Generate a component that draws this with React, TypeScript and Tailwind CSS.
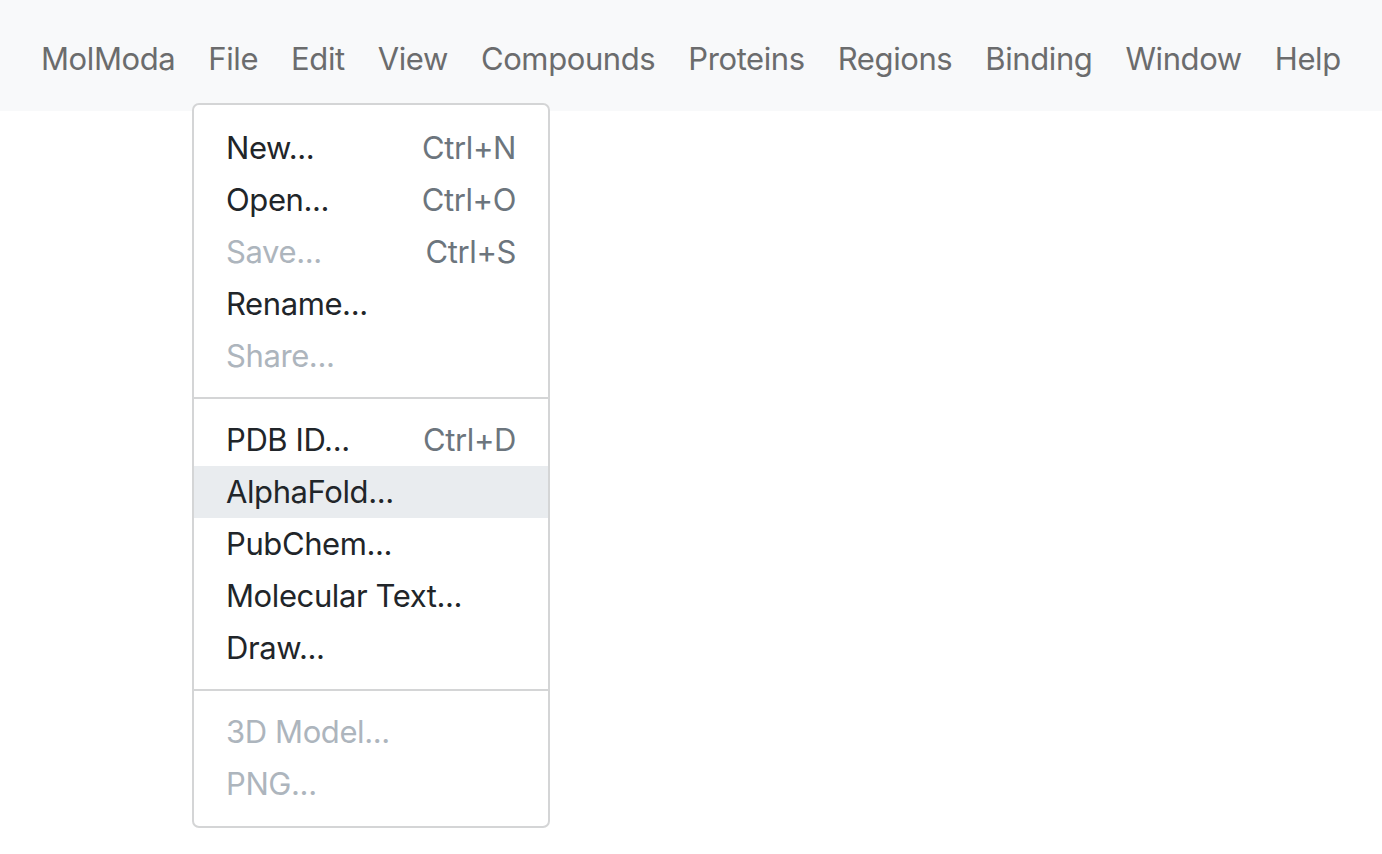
import React from 'react';

type Item = { label: string; shortcut?: string; disabled?: boolean; active?: boolean };

const groups: Item[][] = [
    [
        {label: 'New...', shortcut: 'Ctrl+N'},
        {label: 'Open...', shortcut: 'Ctrl+O'},
        {label: 'Save...', shortcut: 'Ctrl+S', disabled: true},
        {label: 'Rename...'},
        {label: 'Share...', disabled: true},
    ],
    [
        {label: 'PDB ID...', shortcut: 'Ctrl+D'},
        {label: 'AlphaFold...', active: true},
        {label: 'PubChem...'},
        {label: 'Molecular Text...'},
        {label: 'Draw...'},
    ],
    [
        {label: '3D Model...', disabled: true},
        {label: 'PNG...', disabled: true},
    ],
];

const menus = ['File', 'Edit', 'View', 'Compounds', 'Proteins', 'Regions', 'Binding', 'Window', 'Help'];

const App = () => {
    return (
        <div className="relative min-h-screen bg-white font-['Inter','Liberation_Sans',sans-serif] tracking-[-0.4px]">
            <nav className="h-[111px] bg-[#f8f9fa] pt-[35px] pl-[41px]">
                <div className="flex items-center gap-[33px] text-[31px] leading-[48px] text-[#6b6c6d]">
                    <span>MolModa</span>
                    {menus.map((m) => (
                        <span key={m}>{m}</span>
                    ))}
                </div>
            </nav>

            {/* file menu, open */}
            <div className="absolute left-[192px] top-[103px] w-[358px] rounded-[7px] border-2 border-[#d4d5d6] bg-white pt-[17px] pb-4">
                {groups.map((group, gi) => (
                    <div key={gi}>
                        {gi > 0 && <div className="my-[15px] h-[2px] bg-[#d4d5d6]"/>}
                        {group.map((item) => (
                            <div
                                key={item.label}
                                className={`flex h-[52px] items-center justify-between pl-8 pr-[32px] text-[31px] leading-[52px] ${
                                    item.active ? 'bg-[#e9ecef]' : ''
                                } ${item.disabled ? 'text-[#adb5bd]' : 'text-[#212529]'}`}
                            >
                                <span>{item.label}</span>
                                {item.shortcut && <span className="text-[#6c757d]">{item.shortcut}</span>}
                            </div>
                        ))}
                    </div>
                ))}
            </div>
        </div>
    );
};

export default App;
